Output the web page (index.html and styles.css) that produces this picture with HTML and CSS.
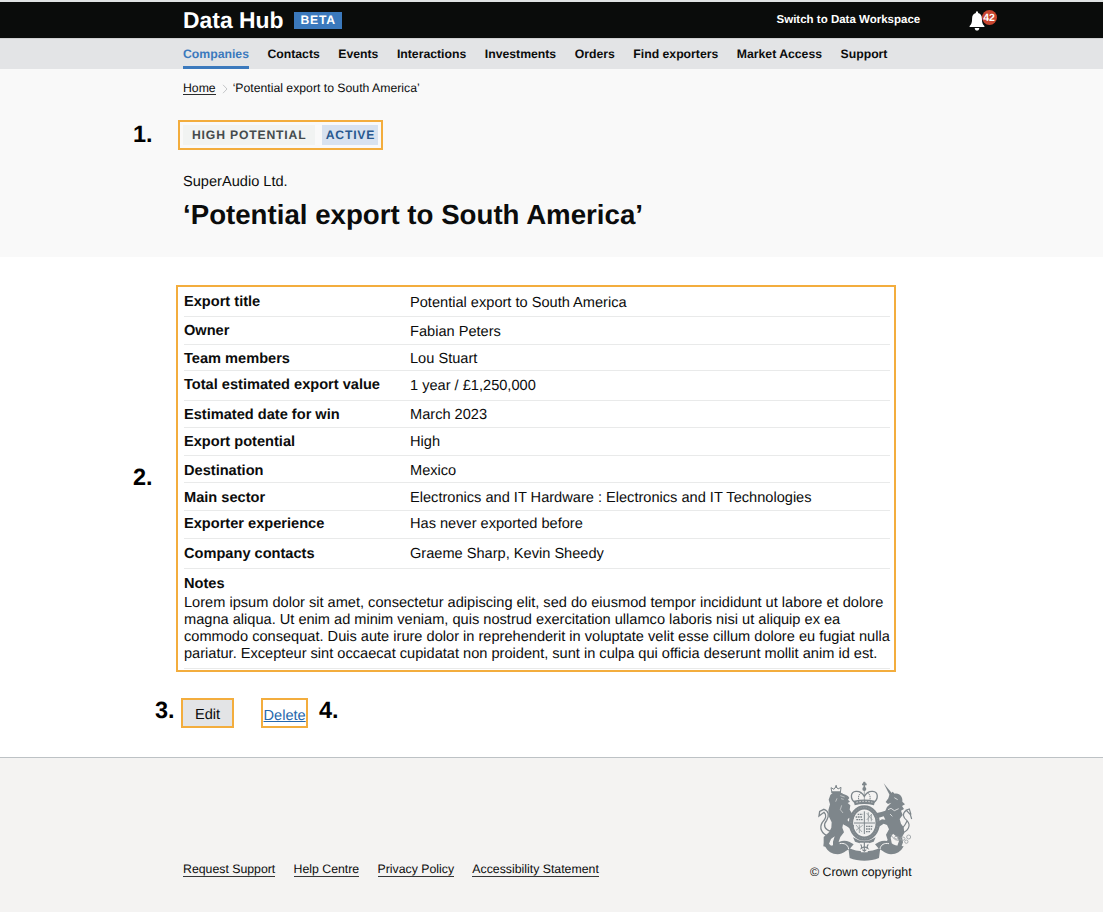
FILE: index.html
```html
<!DOCTYPE html>
<html lang="en">
<head>
<meta charset="utf-8">
<title>Data Hub</title>
<link rel="stylesheet" href="styles.css">
</head>
<body>
<header class="topbar">
  <span class="brand">Data Hub</span>
  <span class="beta">BETA</span>
  <span class="switch">Switch to Data Workspace</span>
  <span class="bell">
    <svg width="16" height="20" viewBox="0 0 16 20" fill="#fff"><path d="M8 .3C7.100 .3 6.800 1 6.900 2C4.200 2.700 3.100 4.800 3.100 7.400C3.100 11.500 2.300 13.300 .6 15V16H15.400V15C13.700 13.300 12.900 11.500 12.900 7.400C12.900 4.800 11.800 2.700 9.100 2C9.200 1 8.900 .3 8 .3Z"/><path d="M5.700 17H10.300C10.300 18.700 9.300 19.600 8 19.600S5.700 18.700 5.700 17Z"/></svg>
    <span class="count">42</span>
  </span>
</header>
<nav class="nav">
  <a class="active">Companies</a><a>Contacts</a><a>Events</a><a>Interactions</a><a>Investments</a><a>Orders</a><a>Find exporters</a><a>Market Access</a><a>Support</a>
</nav>
<section class="hero">
  <div class="crumbs">
    <a class="home">Home</a>
    <svg class="chev" width="6" height="10" viewBox="0 0 6 10" fill="none" stroke="#c4c6c8"><path d="M1 .8L5 5L1 9.200"/></svg>
    <span>‘Potential export to South America’</span>
  </div>
  <div class="tagrow">
    <span class="marker">1.</span>
    <div class="tags"><span class="tag">HIGH POTENTIAL</span><span class="tag blue">ACTIVE</span></div>
  </div>
  <div class="company">SuperAudio Ltd.</div>
  <h1 class="title">‘Potential export to South America’</h1>
</section>
<main class="main">
  <div class="detailrow">
    <span class="marker">2.</span>
    <div class="details">
      <div class="row h30 p7"><b>Export title</b><span class="low">Potential export to South America</span></div>
      <div class="row h28 p6"><b>Owner</b><span class="low">Fabian Peters</span></div>
      <div class="row h26 p6"><b>Team members</b><span>Lou Stuart</span></div>
      <div class="row h30 p6"><b>Total estimated export value</b><span class="low">1 year / £1,250,000</span></div>
      <div class="row h27 p6"><b>Estimated date for win</b><span>March 2023</span></div>
      <div class="row h28 p6"><b>Export potential</b><span>High</span></div>
      <div class="row h27 p7"><b>Destination</b><span>Mexico</span></div>
      <div class="row h28 p7"><b>Main sector</b><span>Electronics and IT Hardware : Electronics and IT Technologies</span></div>
      <div class="row h28 p5"><b>Exporter experience</b><span>Has never exported before</span></div>
      <div class="row h30 p7"><b>Company contacts</b><span>Graeme Sharp, Kevin Sheedy</span></div>
      <div class="notes">
        <b>Notes</b>
        <p>Lorem ipsum dolor sit amet, consectetur adipiscing elit, sed do eiusmod tempor incididunt ut labore et dolore<br>magna aliqua. Ut enim ad minim veniam, quis nostrud exercitation ullamco laboris nisi ut aliquip ex ea<br>commodo consequat. Duis aute irure dolor in reprehenderit in voluptate velit esse cillum dolore eu fugiat nulla<br>pariatur. Excepteur sint occaecat cupidatat non proident, sunt in culpa qui officia deserunt mollit anim id est.</p>
      </div>
    </div>
  </div>
  <div class="actions">
    <span class="marker">3.</span>
    <a class="edit">Edit</a>
    <a class="delete">Delete</a>
    <span class="marker four">4.</span>
  </div>
</main>
<footer class="footer">
  <div class="links"><a>Request Support</a><a>Help Centre</a><a>Privacy Policy</a><a>Accessibility Statement</a></div>
  <div class="crown">
    <svg class="crest" width="98" height="82" viewBox="36 15 294 246" fill="#7e868b">
      <!-- imperial crown -->
      <g fill="none" stroke="#7e868b" stroke-width="4">
        <path d="M151 84C134 72 136 50 153 49C166 48 173 55 178 64C183 55 190 48 203 49C220 50 222 72 205 84"/>
        <path d="M165 84C157 70 161 58 167 54M191 84C199 70 195 58 189 54M178 46V84" stroke-width="3" stroke-dasharray="4 2"/>
        <path d="M178 20V42M171 28H185" stroke-width="5"/>
      </g>
      <circle cx="178" cy="42" r="6"/><circle cx="178" cy="25" r="4"/>
      <path d="M146 77Q178 70 210 77L207 91Q178 83 149 91Z"/>
      <path d="M154 82Q178 76 202 82" fill="none" stroke="#f4f3f2" stroke-width="2" stroke-dasharray="5 4"/>
      <!-- garter and shield -->
      <ellipse cx="178" cy="144" rx="40" ry="47" fill="none" stroke="#7e868b" stroke-width="13"/>
      <ellipse cx="178" cy="144" rx="40" ry="47" fill="none" stroke="#a3a9ac" stroke-width="1.500" stroke-dasharray="4 4"/>
      <ellipse cx="178" cy="143" rx="32" ry="36" fill="#eceded"/>
      <path d="M178 109V177M147 144H210" stroke="#7e868b" stroke-width="3"/>
      <path d="M152 126H173M154 134H173M158 118H173M183 154H204M183 162H201M183 170H195" stroke="#7e868b" stroke-width="4" stroke-dasharray="5 2"/>
      <path d="M185 114L202 135M185 135L200 118M190 112V140M199 117V139M153 150L171 171M153 166L173 151M163 149V174" stroke="#949b9f" stroke-width="2.500" fill="none"/>
      <!-- lion -->
      <path d="M81 54L78 38L87 43L93 34L99 42L108 37L106 54Z" fill="none" stroke="#7e868b" stroke-width="3"/>
      <path d="M80 49H107V55H80ZM91 31H96V39H91Z"/>
      <path d="M76 60C84 50 106 49 115 57C124 60 130 62 133 69L129 74L135 80L128 84L136 91L134 104L140 114L147 129L142 137L132 128L127 135L136 145L147 151L146 158L137 162L125 154L114 148L112 158L117 172L106 186L101 200L109 207L103 213L84 212L84 200L89 184L78 192L72 206L78 212L72 218L55 214L56 203L56 186L72 172L79 158L80 142L72 125L70 106L75 88L71 74Z"/>
      <path d="M106 62L119 66M108 71L116 73M96 70L92 80M110 91L106 104L114 114" fill="none" stroke="#dcdede" stroke-width="2"/>
      <path d="M72 184C49 177 42 158 52 142C62 131 67 121 57 112L42 123L44 109L57 103C72 108 73 122 65 136C54 149 57 164 78 169" fill="none" stroke="#7e868b" stroke-width="4"/>
      <!-- unicorn -->
      <path d="M236 25L262 56L255 62Z"/>
      <path d="M253 60L263 50L269 56C284 53 294 66 292 80L300 88L291 93L297 102L288 107L293 120L284 132L288 146L296 157L298 174L291 186L294 202L288 218L277 212L282 198L277 187L264 176L257 188L260 203L250 210L240 204L248 195L243 179L252 163L246 150L236 146L222 155L213 148L217 141L231 133L241 134L236 124L222 128L214 122L215 114L229 111L241 107L246 96L259 83L249 87L242 81L250 70Z"/>
      <path d="M249 104L258 100L268 107L281 101M268 68L278 74M255 117L262 124" fill="none" stroke="#eceded" stroke-width="2.500"/>
      <path d="M286 176C311 169 319 151 306 137C293 126 291 116 304 106L316 119L320 132M302 106L313 102L318 119M306 138C301 149 298 156 290 160" fill="none" stroke="#7e868b" stroke-width="3.500"/>
      <g fill="none" stroke="#9aa0a3" stroke-width="2.500"><path d="M257 178Q270 202 287 194"/><ellipse cx="275" cy="188" rx="7" ry="4"/><ellipse cx="293" cy="191" rx="7" ry="5"/><circle cx="311" cy="186" r="6"/><circle cx="304" cy="200" r="5"/></g>
      <!-- motto ribbon -->
      <path d="M60 214C72 212 82 214 92 208C102 198 118 194 134 201L146 208L134 222C124 226 115 236 98 238C81 238 68 230 60 214Z"/>
      <path d="M296 214C284 212 274 214 264 208C254 198 238 194 222 201L210 208L222 222C232 226 241 236 258 238C275 238 288 230 296 214Z"/>
      <path d="M130 218C158 232 198 232 226 218L222 249C196 260 160 260 134 249Z"/>
      <path d="M104 206C118 203 129 209 131 222M252 206C238 203 227 209 225 222" fill="none" stroke="#f4f3f2" stroke-width="3"/>
      <path d="M144 187L150 200L178 209L206 200L212 187L195 196L178 199L161 196Z"/>
      <path d="M164 203H192L188 232H168Z" fill="#f4f3f2"/>
      <path d="M178 200V228M167 208Q172 214 169 220L178 215L188 220Q184 214 190 208M172 224L178 229L184 224" fill="none" stroke="#7e868b" stroke-width="3.500"/>
    </svg>
    <span class="copyright">© Crown copyright</span>
  </div>
</footer>
</body>
</html>
```
FILE: styles.css
```css
* { box-sizing: border-box; }
body {
  margin: 0;
  height: 912px;
  display: flex;
  flex-direction: column;
  background: #fff;
  color: #0b0c0c;
  font-family: "Liberation Sans", Arial, sans-serif;
  font-size: 14.600px;
  line-height: 17px;
  text-rendering: geometricPrecision;
  white-space: nowrap;
}
.topbar {
  display: flex;
  height: 38px;
  padding-left: 183px;
  border-top: 2px solid #dfe3e3;
  background: #0a0c0b;
  color: #fff;
  font-weight: bold;
}
.brand { width: 111px; font-size: 22.900px; line-height: 36px; }
.beta {
  width: 48px;
  height: 17px;
  margin-top: 10px;
  padding-left: 6.500px;
  background: #3b79bd;
  font-size: 12.200px;
  line-height: 16px;
  letter-spacing: 0.800px;
}
.switch { width: 193px; margin-left: 434.500px; font-size: 11.520px; line-height: 37px; }
.bell { display: flex; position: relative; margin-top: 9px; width: 28px; height: 20px; }
.bell svg { margin-left: -0.500px; }
.count {
  position: absolute;
  left: 12px;
  top: -1px;
  width: 15px;
  height: 15px;
  border-radius: 50%;
  background: #c8452f;
  font-size: 10.500px;
  line-height: 17px;
  text-align: center;
}
.nav {
  display: flex;
  gap: 18.500px;
  height: 31px;
  padding-left: 183px;
  border-top: 1px solid #cfd1d2;
  background: #e3e4e6;
  font-size: 12.240px;
  font-weight: bold;
  line-height: 30px;
}
.nav .active { color: #3b79bd; border-bottom: 3px solid #3b79bd; }
.hero { height: 188px; padding: 11px 0 0 183px; background: #f9f9f9; }
.crumbs { display: flex; height: 16px; font-size: 12.240px; line-height: 16px; }
.home { border-bottom: 1px solid #2b2c2c; height: 15px; }
.chev { margin: 4px 5px 0 6px; }
.tagrow { display: flex; margin: 24px 0 0 -50px; }
.marker { color: #000; font-size: 23.500px; font-weight: bold; line-height: 27px; }
.tagrow .marker { width: 45px; line-height: 29px; }
.tags {
  display: flex;
  gap: 7.500px;
  width: 205px;
  height: 30px;
  padding: 3px;
  border: 2px solid #f3ad3d;
  font-size: 12.200px;
  font-weight: bold;
  letter-spacing: 0.820px;
  line-height: 20px;
}
.tag { width: 132px; height: 20px; padding-left: 9px; background: #f1f3f2; color: #454b4d; }
.tag.blue { width: 56px; padding-left: 3.500px; background: #d8e2ef; color: #285990; }
.company { margin-top: 24px; }
.title { margin: 8px 0 0; font-size: 27.660px; line-height: 32px; }
.main { height: 500px; padding-top: 28px; }
.detailrow { display: flex; align-items: center; padding-left: 133px; }
.detailrow .marker { width: 43px; padding-bottom: 2px; }
.details { width: 720px; height: 387px; padding: 0 4px 0 6px; border: 2px solid #f3ad3d; }
.row { display: grid; grid-template-columns: 226px 1fr; border-bottom: 1px solid #e9eaea; }
.h26 { height: 26px; }
.h27 { height: 27px; }
.h28 { height: 28px; }
.h30 { height: 30px; }
.p5 { padding-top: 5px; }
.p6 { padding-top: 6px; }
.p7 { padding-top: 7px; }
.low { padding-top: 1px; }
.notes { height: 100px; padding-top: 7px; border-bottom: 1px solid #e9eaea; }
.notes b { display: block; }
.notes p { margin: 2px 0 0; }
.actions { display: flex; margin-top: 26px; padding-left: 155px; }
.actions .marker { width: 26px; line-height: 25px; }
.edit, .delete { height: 30px; border: 2px solid #f3ad3d; line-height: 31px; }
.edit { width: 53px; padding-left: 12px; background: #e3e4e6; }
.delete {
  width: 47px;
  margin-left: 27px;
  padding-left: 0.500px;
  color: #2668ad;
  line-height: 33px;
  text-decoration: underline;
  text-decoration-skip-ink: none;
  text-underline-offset: 1px;
}
.actions .four { margin-left: 11px; }
.footer {
  display: flex;
  flex: 1;
  padding-left: 183px;
  border-top: 1px solid #bdc2c5;
  background: #f4f3f2;
}
.links { display: flex; gap: 18.300px; width: 627px; padding-top: 103px; font-size: 12.300px; line-height: 16px; }
.links a { height: 16px; border-bottom: 1px solid #353636; }
.crown { display: flex; flex-direction: column; padding-top: 22px; font-size: 12.330px; line-height: 16px; }
.crest { margin-left: 7px; }
.copyright { margin-top: 2px; }
```
